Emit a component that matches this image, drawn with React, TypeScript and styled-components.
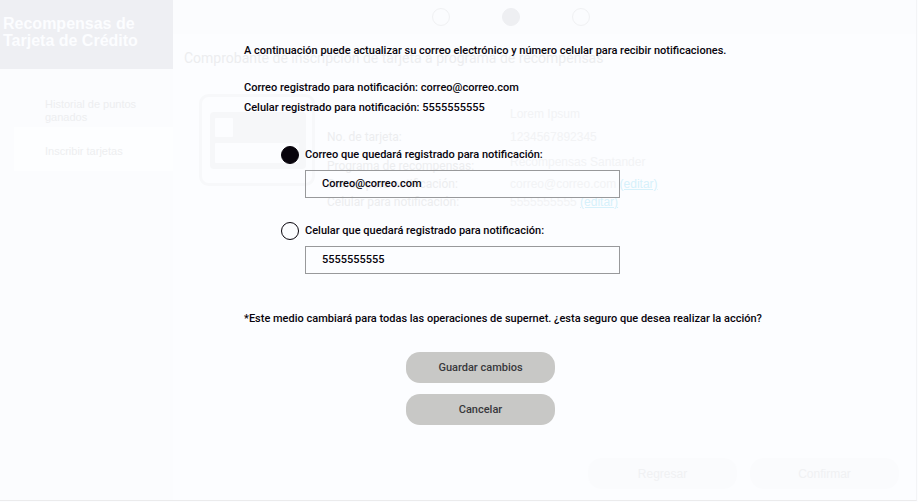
import React, { useState } from "react";
import styled, { createGlobalStyle } from "styled-components";

const GlobalStyle = createGlobalStyle`
  *, *::before, *::after { box-sizing: border-box; }
  html, body, #root { height: 100%; }
  body { margin: 0; background: #fcfdff; }
`;

const humanist = `Roboto, "Noto Sans", sans-serif`;
const grotesque = `"Liberation Sans", Arial, sans-serif`;

const Screen = styled.div`
  position: relative;
  min-height: 100%;
  display: flex;
  flex-direction: column;
  overflow: hidden;
`;

const Backdrop = styled.div`
  flex: 1;
  display: grid;
  grid-template-columns: 173px 1fr;
  margin: 0 1px 1px 0;
  border-right: 1px solid #f3f4f6;
  border-bottom: 1px solid #ebebec;
  font-family: ${grotesque};
  font-size: 12px;
  color: #f2f3f5;
`;

const Sidebar = styled.aside`
  background: #fbfcfe;
`;

const Brand = styled.h1`
  margin: 0;
  height: 69px;
  padding: 15px 3px;
  background: #eeeff3;
  color: #fcfdff;
  font-size: 16px;
  line-height: 17px;
`;

const Menu = styled.nav`
  display: flex;
  flex-direction: column;
  padding: 18px 0 0 14px;
`;

const MenuItem = styled.a<{ $active?: boolean }>`
  display: flex;
  align-items: center;
  height: ${(p) => (p.$active ? 44 : 40)}px;
  padding: ${(p) => (p.$active ? "4px 31px 0" : "8px 31px 0")};
  background: ${(p) => (p.$active ? "#fdfeff" : "transparent")};
  color: #edeef0;
  font-size: 11px;
  line-height: 13px;
  text-decoration: none;
`;

const Main = styled.main`
  display: flex;
  flex-direction: column;
  background: #fcfdff;
`;

const Steps = styled.div`
  display: flex;
  justify-content: center;
  gap: 52px;
  height: 34px;
  padding: 8px 67px 0 0;
  background: #fbfcfe;
`;

const Step = styled.span<{ $current?: boolean }>`
  width: 18px;
  height: 18px;
  border: 1px solid ${(p) => (p.$current ? "#eeeff2" : "#f0f1f3")};
  border-radius: 50%;
  background: ${(p) => (p.$current ? "#eeeff2" : "transparent")};
`;

const Title = styled.h2`
  margin: 14px 0 0 11px;
  font: 400 14px/20px ${humanist};
  color: #ecedef;
`;

const Summary = styled.div`
  display: flex;
  gap: 12px;
  padding: 26px 26px 0;
`;

const Details = styled.dl`
  display: grid;
  grid-template-columns: 183px 1fr;
  grid-template-rows: 22px 24px 26px 18px 18px;
  align-items: center;
  margin: 9px 0 0;
`;

const Term = styled.dt<{ $low?: boolean }>`
  align-self: ${(p) => (p.$low ? "end" : "center")};
  color: #ecedef;
  font: 400 12px/18px ${humanist};
`;

const Value = styled.dd`
  margin: 0;
`;

const EditLink = styled.a`
  color: #d6f1fb;
`;

const BackdropActions = styled.div`
  display: flex;
  justify-content: flex-end;
  gap: 13px;
  margin-top: auto;
  padding: 0 17px 11px;
`;

const Overlay = styled.section`
  position: absolute;
  inset: 0;
  padding: 41px 24px 0 244px;
  color: #08040c;
  font: 500 11px/20px ${humanist};
`;

const Text = styled.p`
  margin: 0;
`;

const Registered = styled.div`
  margin-top: 17px;
`;

const Fields = styled.div`
  display: grid;
  grid-template-columns: 18px minmax(0, 315px);
  column-gap: 6px;
  row-gap: 5px;
  margin: 27px 0 0 37px;
`;

const Radio = styled.input`
  appearance: none;
  align-self: center;
  width: 18px;
  height: 18px;
  margin: 0;
  border: 1px solid #08040c;
  border-radius: 50%;
  &:checked {
    background: #08040c;
  }
`;

const TextBox = styled.input`
  grid-column: 2;
  width: 100%;
  height: 28px;
  padding: 0 16px 2px;
  border: 1px solid #98999b;
  border-radius: 0;
  background: transparent;
  color: inherit;
  font: inherit;
  &:not(:last-child) {
    margin-bottom: 18px;
  }
`;

const Note = styled(Text)`
  margin-top: 35px;
`;

const Actions = styled.div`
  display: flex;
  flex-direction: column;
  gap: 11px;
  width: 149px;
  margin: 23px 0 0 162px;
`;

const Button = styled.button<{ $muted?: boolean }>`
  width: 149px;
  height: 31px;
  padding: 0;
  border: 0;
  border-radius: 14px;
  background: ${(p) => (p.$muted ? "#fafbfd" : "#c8c8c6")};
  color: ${(p) => (p.$muted ? "#f0f1f3" : "#38383c")};
  font: ${(p) => (p.$muted ? `400 12px/20px ${grotesque}` : `500 11px/20px ${humanist}`)};
`;

function CardIcon() {
  return (
    <svg width="116" height="92" viewBox="0 0 116 92" aria-hidden="true">
      <rect x="1.5" y="1.5" width="113" height="89" rx="8" fill="none" stroke="#f7f8fa" strokeWidth="3" />
      <rect x="11" y="18" width="96" height="57" rx="4" fill="#f6f7f9" />
      <rect x="16" y="24" width="18" height="19" rx="1" fill="#fcfdff" />
      <rect x="16" y="49" width="84" height="20" rx="1" fill="#fcfdff" />
    </svg>
  );
}

export default function App() {
  const [channel, setChannel] = useState("email");
  const [email, setEmail] = useState("Correo@correo.com");
  const [phone, setPhone] = useState("5555555555");

  return (
    <Screen>
      <GlobalStyle />
      <Backdrop inert>
        <Sidebar>
          <Brand>Recompensas de Tarjeta de Crédito</Brand>
          <Menu>
            <MenuItem href="#historial">Historial de puntos ganados</MenuItem>
            <MenuItem href="#inscribir" $active>Inscribir tarjetas</MenuItem>
          </Menu>
        </Sidebar>
        <Main>
          <Steps>
            <Step />
            <Step $current />
            <Step />
          </Steps>
          <Title>Comprobante de inscripción de tarjeta a programa de recompensas</Title>
          <Summary>
            <CardIcon />
            <Details>
              <Term />
              <Value>Lorem Ipsum</Value>
              <Term>No. de tarjeta:</Term>
              <Value>1234567892345</Value>
              <Term $low>Programa de recompensas:</Term>
              <Value>Recompensas Santander</Value>
              <Term>Correo para notificación:</Term>
              <Value>correo@correo.com <EditLink href="#correo">(editar)</EditLink></Value>
              <Term>Celular para notificación:</Term>
              <Value>5555555555 <EditLink href="#celular">(editar)</EditLink></Value>
            </Details>
          </Summary>
          <BackdropActions>
            <Button type="button" $muted>Regresar</Button>
            <Button type="button" $muted>Confirmar</Button>
          </BackdropActions>
        </Main>
      </Backdrop>

      <Overlay role="dialog" aria-label="Actualizar datos de notificación">
        <Text>A continuación puede actualizar su correo electrónico y número celular para recibir notificaciones.</Text>
        <Registered>
          <Text>Correo registrado para notificación: correo@correo.com</Text>
          <Text>Celular registrado para notificación: 5555555555</Text>
        </Registered>
        <Fields>
          <Radio type="radio" name="channel" id="use-email" checked={channel === "email"} onChange={() => setChannel("email")} />
          <label htmlFor="use-email" id="email-label">Correo que quedará registrado para notificación:</label>
          <TextBox type="email" aria-labelledby="email-label" value={email} onChange={(e) => setEmail(e.target.value)} />
          <Radio type="radio" name="channel" id="use-phone" checked={channel === "phone"} onChange={() => setChannel("phone")} />
          <label htmlFor="use-phone" id="phone-label">Celular que quedará registrado para notificación:</label>
          <TextBox type="tel" aria-labelledby="phone-label" value={phone} onChange={(e) => setPhone(e.target.value)} />
        </Fields>
        <Note>*Este medio cambiará para todas las operaciones de supernet. ¿esta seguro que desea realizar la acción?</Note>
        <Actions>
          <Button type="button">Guardar cambios</Button>
          <Button type="button">Cancelar</Button>
        </Actions>
      </Overlay>
    </Screen>
  );
}
